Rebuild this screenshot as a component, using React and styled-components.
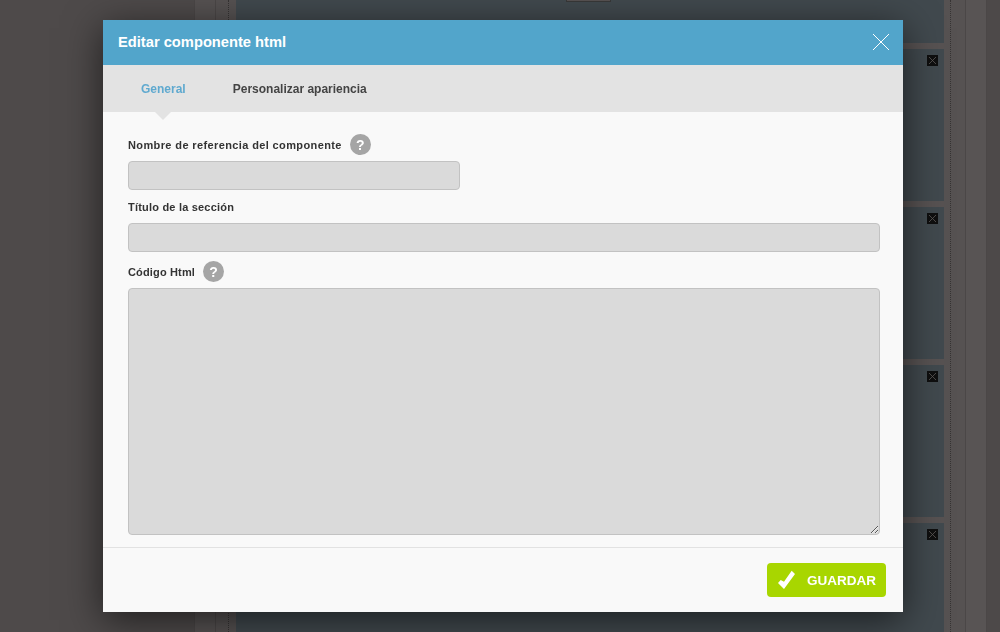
import React from 'react'
import styled, { createGlobalStyle } from 'styled-components'

const Global = createGlobalStyle`
  html, body {
    margin: 0;
    height: 100%;
    overflow: hidden;
    background: #4e4a4a;
    font-family: "Liberation Sans", Arial, sans-serif;
  }
  * {
    box-sizing: border-box;
  }
`

const Page = styled.div`
  display: flex;
  width: 1000px;
  height: 632px;
  overflow: hidden;
`

const Side = styled.div`
  width: ${(p) => p.$width}px;
  flex: none;
  background: ${(p) => p.$color};
  border-left: ${(p) => (p.$line ? '1px solid #4b4747' : 'none')};
`

const Gutter = styled(Side)`
  display: flex;
  justify-content: ${(p) => (p.$flip ? 'flex-start' : 'flex-end')};
  padding: ${(p) => (p.$flip ? '0 0 0 6px' : '0 6px 0 0')};

  &::after {
    content: '';
    width: 1px;
    border-left: 1px dotted #363333;
  }
`

const Main = styled.div`
  width: 708px;
  flex: none;
  display: flex;
  flex-direction: column;
  background: #41494e;
`

const Card = styled.div`
  height: ${(p) => p.$height}px;
  flex: none;
  display: flex;
  flex-direction: column;
  align-items: flex-end;
  border-bottom: 6px solid #575252;
`

const TopTab = styled.div`
  width: 45px;
  height: 2px;
  margin: 0 333px 0 auto;
  background: #575252;
  border: 1px solid #383838;
  border-top: 0;
`

const RemoveBox = styled.div`
  width: 11px;
  height: 11px;
  margin: 6px 6px 0 0;
  display: flex;
  background: #0f0f0f;

  svg {
    width: 11px;
    height: 11px;
  }
`

const Modal = styled.div`
  position: fixed;
  left: 103px;
  top: 20px;
  width: 800px;
  height: 592px;
  display: flex;
  flex-direction: column;
  background: #f9f9f9;
  box-shadow: 0 8px 36px rgba(0, 0, 0, 0.6);
`

const Header = styled.header`
  height: 45px;
  flex: none;
  display: flex;
  align-items: center;
  justify-content: space-between;
  padding: 0 13px 1px 15px;
  background: #52a5cb;
  color: #fff;
  font-size: 14.7px;
  font-weight: bold;
`

const CloseIcon = styled.svg`
  width: 18px;
  height: 18px;
  display: block;
  shape-rendering: crispEdges;
`

const Tabs = styled.nav`
  height: 47px;
  flex: none;
  display: flex;
  align-items: center;
  gap: 47px;
  padding: 0 0 0 38px;
  background: #e3e3e3;
  font-size: 12px;
  font-weight: bold;
`

const Tab = styled.span`
  position: relative;
  color: ${(p) => (p.$active ? '#5fa9cf' : '#444')};

  ${(p) =>
    p.$active &&
    `
    &::after {
      content: '';
      position: absolute;
      left: 50%;
      top: 30px;
      margin-left: -8px;
      border: 8px solid transparent;
      border-bottom: 0;
      border-top-color: #e3e3e3;
    }
  `}
`

const Body = styled.div`
  flex: 1;
  display: flex;
  flex-direction: column;
  padding: 22px 23px 12px 25px;
`

const LabelRow = styled.div`
  height: ${(p) => p.$height}px;
  flex: none;
  display: flex;
  align-items: center;
  gap: 8px;
  padding: ${(p) => p.$pad || '0'};
  font-size: 11px;
  font-weight: bold;
  color: #333;
  letter-spacing: ${(p) => p.$spacing}px;
`

const Help = styled.span`
  width: 21px;
  height: 21px;
  flex: none;
  display: flex;
  align-items: center;
  justify-content: center;
  border-radius: 50%;
  background: #a5a5a5;
  color: #fff;
  font-size: 14px;
  font-weight: bold;
  letter-spacing: 0;
`

const Input = styled.input`
  display: block;
  flex: none;
  width: ${(p) => p.$width || '100%'};
  height: 29px;
  margin: 0;
  padding: 0 8px;
  background: #dadada;
  border: 1px solid #c2c2c2;
  border-radius: 4px;
  outline: none;
`

const Area = styled.textarea`
  display: block;
  flex: 1;
  width: 100%;
  margin: 0;
  padding: 8px;
  background: #dadada;
  border: 1px solid #c2c2c2;
  border-radius: 4px;
  outline: none;
  resize: vertical;
`

const Footer = styled.footer`
  height: 65px;
  flex: none;
  display: flex;
  align-items: flex-start;
  justify-content: flex-end;
  padding: 15px 17px 0 0;
  border-top: 1px solid #e2e2e2;
`

const SaveButton = styled.button`
  width: 119px;
  height: 34px;
  display: flex;
  align-items: center;
  gap: 11px;
  padding: 0 0 0 9px;
  border: 0;
  border-radius: 4px;
  background: #a8d600;
  color: #fff;
  font-family: inherit;
  font-size: 13.5px;
  font-weight: bold;

  svg {
    width: 20px;
    height: 20px;
    flex: none;
  }
`

const cards = [49, 158, 158, 158, 158]

function RemoveIcon() {
  return (
    <RemoveBox>
      <svg viewBox="0 0 11 11">
        <path d="M2 2l7 7M9 2l-7 7" stroke="#5f5a58" strokeWidth="0.8" fill="none" />
      </svg>
    </RemoveBox>
  )
}

export default function App() {
  return (
    <>
      <Global />
      <Page>
        <Side $width={194} $color="#4e4a4a" />
        <Side $width={21} $color="#565252" $line />
        <Gutter $width={21} $color="#565252" $line />
        <Main>
          {cards.map((height, i) => (
            <Card key={i} $height={height}>
              {i === 0 ? <TopTab /> : <RemoveIcon />}
            </Card>
          ))}
        </Main>
        <Gutter $width={21} $color="#565252" $flip />
        <Side $width={21} $color="#585454" $line />
        <Side $width={14} $color="#4d4949" $line />
      </Page>

      <Modal>
        <Header>
          <span>Editar componente html</span>
          <CloseIcon viewBox="0 0 18 18">
            <path d="M1 1l16 16M17 1L1 17" stroke="#fff" strokeWidth="1" fill="none" />
          </CloseIcon>
        </Header>
        <Tabs>
          <Tab $active>General</Tab>
          <Tab>Personalizar apariencia</Tab>
        </Tabs>
        <Body>
          <LabelRow $height={27} $pad="0 0 6px" $spacing={0.38}>
            Nombre de referencia del componente
            <Help>?</Help>
          </LabelRow>
          <Input $width="332px" />
          <LabelRow $height={33} $spacing={0.2}>Título de la sección</LabelRow>
          <Input />
          <LabelRow $height={36} $pad="3px 0 0" $spacing={0.15}>
            Código Html
            <Help>?</Help>
          </LabelRow>
          <Area />
        </Body>
        <Footer>
          <SaveButton>
            <svg viewBox="0 0 20 20">
              <path d="M4.700 10L8 11.700 15.700 0.700 19 4 8 19 2 13z" fill="#fff" />
            </svg>
            GUARDAR
          </SaveButton>
        </Footer>
      </Modal>
    </>
  )
}
